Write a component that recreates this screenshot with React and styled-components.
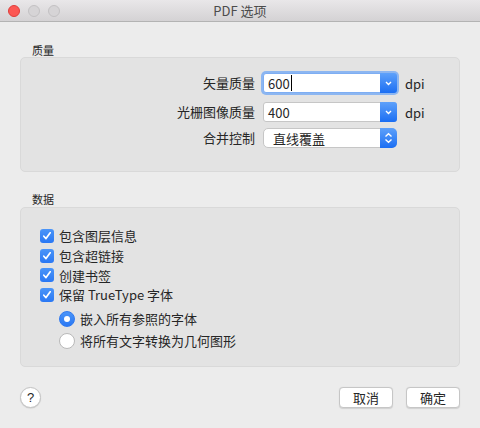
import React from "react";
import styled, { createGlobalStyle } from "styled-components";

const GlobalStyle = createGlobalStyle`
  html, body { margin: 0; padding: 0; background: #ececec; }
  body {
    font-family: "Noto Sans CJK SC", "Liberation Sans", sans-serif;
    font-size: 13px;
    color: #262626;
  }
`;

const Window = styled.div`
  width: 480px;
  height: 428px;
  background: #ececec;
  display: flex;
  flex-direction: column;
  box-sizing: border-box;
  overflow: hidden;
`;

const TitleBar = styled.div`
  height: 21px;
  flex: none;
  display: flex;
  align-items: center;
  position: relative;
  background: linear-gradient(#e9e7e9, #d4d2d4);
  border-bottom: 1px solid #b3b3b3;
  padding-left: 8px;
  gap: 8px;
`;

const Light = styled.span`
  width: 12px;
  height: 12px;
  border-radius: 50%;
  box-sizing: border-box;
  background: ${(p) => (p.$red ? "#fc5753" : "#d6d4d6")};
  border: 1px solid ${(p) => (p.$red ? "#df3d3a" : "#c3c1c3")};
`;

const Title = styled.div`
  position: absolute;
  left: 0;
  right: 0;
  text-align: center;
  font-size: 13px;
  color: #4c4c4c;
  pointer-events: none;
`;

const Body = styled.div`
  flex: 1;
  padding: 0 20px;
  display: flex;
  flex-direction: column;
`;

const SectionLabel = styled.div`
  font-size: 11px;
  line-height: 14px;
  margin: ${(p) => p.$top}px 0 ${(p) => p.$bottom}px 12px;
  color: #262626;
`;

const Panel = styled.div`
  background: #e3e3e3;
  border: 1px solid #d9d9d9;
  border-radius: 5px;
  box-sizing: border-box;
  height: ${(p) => p.$h}px;
`;

const QualityGrid = styled.div`
  display: grid;
  grid-template-columns: 234px 134px auto;
  column-gap: 8px;
  align-items: center;
  padding-top: 15px;
`;

const RowLabel = styled.div`
  text-align: right;
  height: 20px;
  line-height: 20px;
  margin: ${(p) => p.$m || "0"};
`;

const Combo = styled.div`
  height: 20px;
  box-sizing: border-box;
  background: #fff;
  border: 1px solid ${(p) => (p.$focus ? "#7eaef3" : "#c6c6c6")};
  box-shadow: ${(p) => (p.$focus ? "0 0 0 2px #8cb6f1" : "none")};
  border-radius: ${(p) => (p.$popup ? "5px" : "3px")};
  display: flex;
  align-items: center;
  margin: ${(p) => p.$m || "0"};
`;

const ComboText = styled.div`
  flex: 1;
  padding-left: ${(p) => p.$pl}px;
  display: flex;
  align-items: center;
  font-size: 13px;
`;

const Caret = styled.span`
  width: 1px;
  height: 16px;
  background: #000;
  margin-left: 1px;
`;

const Arrow = styled.div`
  width: 17px;
  height: 20px;
  margin: -1px -1px -1px 0;
  background: linear-gradient(#5ea1fa, #1b6ef3);
  border-radius: 0 ${(p) => (p.$popup ? "5px 5px" : "3px 3px")} 0;
  display: flex;
  align-items: center;
  justify-content: center;
`;

const Unit = styled.div`
  font-size: 13px;
  margin: ${(p) => p.$m || "0"};
`;

const List = styled.div`
  display: flex;
  flex-direction: column;
  padding: 18px 0 0 19px;
`;

const CheckRow = styled.label`
  display: flex;
  align-items: center;
  height: ${(p) => p.$h}px;
  gap: 5px;
  margin-left: ${(p) => p.$indent}px;
  margin-top: ${(p) => p.$mt || 0}px;
`;

const Box = styled.span`
  width: 14px;
  height: 14px;
  border-radius: 3px;
  background: linear-gradient(#4b95f8, #2a78f4);
  display: flex;
  align-items: center;
  justify-content: center;
`;

const Radio = styled.span`
  width: 16px;
  height: 16px;
  box-sizing: border-box;
  border-radius: 50%;
  background: ${(p) => (p.$on ? "linear-gradient(#4b95f8, #2a78f4)" : "#fff")};
  border: 1px solid ${(p) => (p.$on ? "#2f79f0" : "#b9b9b9")};
  display: flex;
  align-items: center;
  justify-content: center;
  &::after {
    content: "";
    width: 6px;
    height: 6px;
    border-radius: 50%;
    background: #fff;
    display: ${(p) => (p.$on ? "block" : "none")};
  }
`;

const Footer = styled.div`
  display: flex;
  align-items: center;
  margin-top: 20px;
  gap: 13px;
`;

const Help = styled.div`
  width: 21px;
  height: 21px;
  box-sizing: border-box;
  border-radius: 50%;
  background: #fff;
  border: 1px solid #c4c4c4;
  display: flex;
  align-items: center;
  justify-content: center;
  font-family: "Liberation Sans", sans-serif;
  font-size: 13px;
  margin-right: auto;
  box-shadow: 0 0.5px 1px rgba(0, 0, 0, 0.15);
`;

const Button = styled.div`
  width: 54px;
  height: 21px;
  box-sizing: border-box;
  background: #fff;
  border: 1px solid #c6c6c6;
  border-radius: 4px;
  display: flex;
  align-items: center;
  justify-content: center;
  font-size: 13px;
  box-shadow: 0 0.5px 1px rgba(0, 0, 0, 0.12);
`;

const Chevron = ({ both }) => (
  <svg width="9" height="12" viewBox="0 0 9 12">
    {both ? (
      <>
        <path d="M1.5 4.5 L4.5 1.8 L7.5 4.5" fill="none" stroke="#fff" strokeWidth="1.4" />
        <path d="M1.5 7.5 L4.5 10.2 L7.5 7.5" fill="none" stroke="#fff" strokeWidth="1.4" />
      </>
    ) : (
      <path d="M2 5 L4.5 7.5 L7 5" fill="none" stroke="#fff" strokeWidth="1.4" />
    )}
  </svg>
);

const Check = () => (
  <svg width="10" height="10" viewBox="0 0 10 10">
    <path d="M1.8 5.2 L4 7.6 L8.2 1.8" fill="none" stroke="#fff" strokeWidth="1.7" strokeLinecap="round" strokeLinejoin="round" />
  </svg>
);

const checks = ["包含图层信息", "包含超链接", "创建书签", "保留 TrueType 字体"];

export default function App() {
  return (
    <Window>
      <GlobalStyle />
      <TitleBar>
        <Light $red />
        <Light />
        <Light />
        <Title>PDF 选项</Title>
      </TitleBar>
      <Body>
        <SectionLabel $top={21} $bottom={0}>质量</SectionLabel>
        <Panel $h={115}>
          <QualityGrid>
            <RowLabel $m="0 0 9px">矢量质量</RowLabel>
            <Combo $focus $m="0 0 9px">
              <ComboText $pl={4}>
                600<Caret />
              </ComboText>
              <Arrow>
                <Chevron />
              </Arrow>
            </Combo>
            <Unit $m="0 0 9px">dpi</Unit>
            <RowLabel $m="0 0 6px">光栅图像质量</RowLabel>
            <Combo $m="0 0 6px">
              <ComboText $pl={4}>400</ComboText>
              <Arrow>
                <Chevron />
              </Arrow>
            </Combo>
            <Unit $m="0 0 6px">dpi</Unit>
            <RowLabel>合并控制</RowLabel>
            <Combo $popup>
              <ComboText $pl={9}>直线覆盖</ComboText>
              <Arrow $popup>
                <Chevron both />
              </Arrow>
            </Combo>
            <div />
          </QualityGrid>
        </Panel>
        <SectionLabel $top={20} $bottom={1}>数据</SectionLabel>
        <Panel $h={160}>
          <List>
            {checks.map((c) => (
              <CheckRow key={c} $h={19.7} $indent={0}>
                <Box>
                  <Check />
                </Box>
                {c}
              </CheckRow>
            ))}
            <CheckRow $h={22} $indent={19} $mt={3}>
              <Radio $on />
              嵌入所有参照的字体
            </CheckRow>
            <CheckRow $h={22} $indent={19}>
              <Radio />
              将所有文字转换为几何图形
            </CheckRow>
          </List>
        </Panel>
        <Footer>
          <Help>?</Help>
          <Button>取消</Button>
          <Button>确定</Button>
        </Footer>
      </Body>
    </Window>
  );
}
